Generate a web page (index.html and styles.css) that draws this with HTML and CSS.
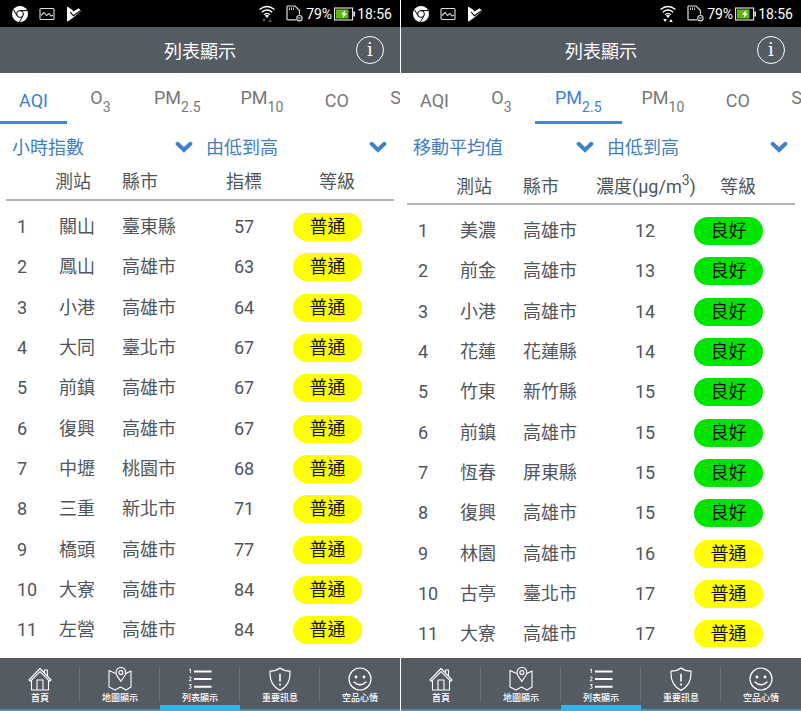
FILE: index.html
```html
<!DOCTYPE html>
<html lang="zh-Hant">
<head>
    <meta charset="UTF-8">
    <meta name="viewport" content="width=device-width, initial-scale=1.0">
    <title>列表顯示</title>
    <link rel="stylesheet" href="styles.css">
</head>
<body>
    <!-- Shared icons -->
    <svg class="sprite" aria-hidden="true">
        <symbol id="chrome" viewBox="0 0 16 16">
            <circle cx="8" cy="8" r="8" fill="#fff"/>
            <circle cx="8" cy="8" r="3.4" fill="none" stroke="#000" stroke-width="1"/>
            <path d="M8 4.6H15M5 9.7L1.6 3.8M11 9.7L7.5 15.8" fill="none" stroke="#000" stroke-width="1"/>
        </symbol>
        <symbol id="image" viewBox="0 0 16 14">
            <rect x="1" y="1.5" width="14" height="11" rx="1" fill="none" stroke="#ddd" stroke-width="1.1"/>
            <path d="M2 8.5L5 5.5L7.5 8.5L10 6.5L12 9L14 8" fill="none" stroke="#ddd" stroke-width="1.1"/>
        </symbol>
        <symbol id="play" viewBox="0 0 16 16">
            <path d="M1 1.2Q1 0.4 1.8 0.9L6 3.6L7.4 5.4L12.6 2.2L15 5L8 11L2.2 15.2Q1 15.8 1 14.6Z" fill="#fff"/>
            <path d="M4.2 6.2L7.4 9.8L14.6 4.6" fill="none" stroke="#000" stroke-width="1.1"/>
        </symbol>
        <symbol id="wifi" viewBox="0 0 16 18">
            <g fill="none" stroke="#fff" stroke-width="1.3">
                <path d="M0.5 4.5Q8 -1.5 15.5 4.5"/>
                <path d="M2.8 7.2Q8 2.8 13.2 7.2"/>
                <path d="M5 9.7Q8 7 11 9.7"/>
            </g>
            <path d="M6 10.5Q8 9 10 10.5L8 13Z" fill="#fff"/>
            <path d="M3.2 14H6.8L5 17ZM9.2 17H12.8L11 14Z" fill="currentColor"/>
        </symbol>
        <symbol id="sdcard" viewBox="0 0 17 17">
            <path d="M10 14.8H1.8Q1 14.8 1 14V1.8Q1 1 1.8 1H9L13.5 5.5V9.5" fill="none" stroke="#ddd" stroke-width="1.2"/>
            <path d="M3.5 2.5V5M5.5 2.5V5M7.5 2.5V5" stroke="#bbb" stroke-width="1"/>
            <circle cx="13.4" cy="13.2" r="2.7" fill="#000" stroke="#ddd" stroke-width="1.1"/>
            <path d="M12.3 12.1L14.5 14.3M14.5 12.1L12.3 14.3" stroke="#ddd" stroke-width="0.8"/>
        </symbol>
        <symbol id="battery" viewBox="0 0 21 14">
            <rect x="0.6" y="1" width="18" height="12" fill="#000" stroke="#eee" stroke-width="1.1"/>
            <rect x="19.4" y="4.5" width="1.6" height="5" fill="#eee"/>
            <rect x="2" y="2.4" width="12.5" height="9.2" fill="#5cb510"/>
            <path d="M11.5 2.8L7 7.6H9.5L8.5 11.2L13 6.4H10.5Z" fill="#fff"/>
        </symbol>
        <symbol id="chevron" viewBox="0 0 18 12">
            <path d="M2.6 2.8L9 9L15.4 2.8" fill="none" stroke="#4080c8" stroke-width="4" stroke-linecap="round"/>
        </symbol>
        <symbol id="home" viewBox="0 0 24 24">
            <g fill="none" stroke="#fff" stroke-width="1.1" stroke-linejoin="round">
                <path d="M1 13L12 1.5L23 13L21.5 14.2L12 4.6L2.5 14.2Z"/>
                <path d="M3.5 13.5V23H20.5V13.5"/>
                <path d="M9 23V13H15V23"/>
                <path d="M16.5 6V3H19.5V9"/>
            </g>
        </symbol>
        <symbol id="map" viewBox="0 0 24 24">
            <g fill="none" stroke="#fff" stroke-width="1.1" stroke-linejoin="round">
                <path d="M7.6 6.5L6.5 6L1 3.5V20L7 23L12.5 20L18 23L23 20V4L18 6.5L17.4 6.8"/>
                <path d="M12.8 14.5C10.5 10.8 8 8.5 8 5.4A4.9 4.9 0 0 1 17.8 5.4C17.8 8.5 15 10.8 12.8 14.5Z"/>
                <circle cx="12.9" cy="5.6" r="2"/>
            </g>
        </symbol>
        <symbol id="list" viewBox="0 0 24 24">
            <path d="M6 4.5H23.5M6 12H23.5M6 19.8H23.5" stroke="#fff" stroke-width="2"/>
            <g fill="none" stroke="#fff" stroke-width="0.9">
                <path d="M1.2 2.8L2.4 2V6"/>
                <path d="M1 10.4Q2.4 9.2 3.2 10.4Q3.3 11.5 1 13.8H3.5"/>
                <path d="M1 17.6H3.3L2.2 19.2Q3.6 19.4 3.3 20.8Q2.4 22 0.9 21.2"/>
            </g>
        </symbol>
        <symbol id="shield" viewBox="0 0 24 24">
            <path d="M12 1Q16.5 4.3 22 4.2Q22.8 18 12 23.4Q1.2 18 2 4.2Q7.5 4.3 12 1Z" fill="none" stroke="#fff" stroke-width="1.2" stroke-linejoin="round"/>
            <path d="M12 6.8V14.5M12 16.6V18.4" stroke="#fff" stroke-width="1.6"/>
        </symbol>
        <symbol id="smile" viewBox="0 0 24 24">
            <circle cx="12" cy="12" r="11" fill="none" stroke="#fff" stroke-width="1.2"/>
            <circle cx="8" cy="10" r="1.4" fill="#fff"/>
            <circle cx="16" cy="10" r="1.4" fill="#fff"/>
            <path d="M6 15Q12 20.5 18 15" fill="none" stroke="#fff" stroke-width="1.3" stroke-linecap="round"/>
        </symbol>
    </svg>

    <section class="phone">
        <div class="status">
            <svg class="icon-16"><use href="#chrome"/></svg>
            <svg class="icon-16"><use href="#image"/></svg>
            <svg class="icon-16"><use href="#play"/></svg>
            <svg class="wifi idle"><use href="#wifi"/></svg>
            <svg class="sdcard"><use href="#sdcard"/></svg>
            <span class="percent">79%</span>
            <svg class="battery"><use href="#battery"/></svg>
            <span>18:56</span>
        </div>
        <header class="titlebar">
            <h1>列表顯示</h1>
            <button class="info" type="button" aria-label="說明">i</button>
        </header>
        <nav class="tabs">
            <button type="button" class="active">AQI</button>
            <button type="button">O<sub>3</sub></button>
            <button type="button">PM<sub>2.5</sub></button>
            <button type="button">PM<sub>10</sub></button>
            <button type="button">CO</button>
            <button type="button">SO<sub>2</sub></button>
        </nav>
        <form class="filters">
            <div class="filter">
                <select aria-label="指標"><option>小時指數</option></select>
                <svg><use href="#chevron"/></svg>
            </div>
            <div class="filter">
                <select aria-label="排序"><option>由低到高</option></select>
                <svg><use href="#chevron"/></svg>
            </div>
        </form>
        <div class="list">
            <table>
                <colgroup><col class="c-no"><col class="c-site"><col class="c-county"><col class="c-value"><col></colgroup>
                <thead>
                    <tr><th></th><th>測站</th><th>縣市</th><th>指標</th><th>等級</th></tr>
                </thead>
                <tbody>
                    <tr><td>1</td><td>關山</td><td>臺東縣</td><td>57</td><td><span class="level normal">普通</span></td></tr>
                    <tr><td>2</td><td>鳳山</td><td>高雄市</td><td>63</td><td><span class="level normal">普通</span></td></tr>
                    <tr><td>3</td><td>小港</td><td>高雄市</td><td>64</td><td><span class="level normal">普通</span></td></tr>
                    <tr><td>4</td><td>大同</td><td>臺北市</td><td>67</td><td><span class="level normal">普通</span></td></tr>
                    <tr><td>5</td><td>前鎮</td><td>高雄市</td><td>67</td><td><span class="level normal">普通</span></td></tr>
                    <tr><td>6</td><td>復興</td><td>高雄市</td><td>67</td><td><span class="level normal">普通</span></td></tr>
                    <tr><td>7</td><td>中壢</td><td>桃園市</td><td>68</td><td><span class="level normal">普通</span></td></tr>
                    <tr><td>8</td><td>三重</td><td>新北市</td><td>71</td><td><span class="level normal">普通</span></td></tr>
                    <tr><td>9</td><td>橋頭</td><td>高雄市</td><td>77</td><td><span class="level normal">普通</span></td></tr>
                    <tr><td>10</td><td>大寮</td><td>高雄市</td><td>84</td><td><span class="level normal">普通</span></td></tr>
                    <tr><td>11</td><td>左營</td><td>高雄市</td><td>84</td><td><span class="level normal">普通</span></td></tr>
                </tbody>
            </table>
        </div>
        <nav class="bottombar">
            <a href="#"><svg><use href="#home"/></svg>首頁</a>
            <a href="#"><svg><use href="#map"/></svg>地圖顯示</a>
            <a href="#" class="active"><svg><use href="#list"/></svg>列表顯示</a>
            <a href="#"><svg><use href="#shield"/></svg>重要訊息</a>
            <a href="#"><svg><use href="#smile"/></svg>空品心情</a>
        </nav>
    </section>

    <section class="phone">
        <div class="status">
            <svg class="icon-16"><use href="#chrome"/></svg>
            <svg class="icon-16"><use href="#image"/></svg>
            <svg class="icon-16"><use href="#play"/></svg>
            <svg class="wifi"><use href="#wifi"/></svg>
            <svg class="sdcard"><use href="#sdcard"/></svg>
            <span class="percent">79%</span>
            <svg class="battery"><use href="#battery"/></svg>
            <span>18:56</span>
        </div>
        <header class="titlebar">
            <h1>列表顯示</h1>
            <button class="info" type="button" aria-label="說明">i</button>
        </header>
        <nav class="tabs">
            <button type="button">AQI</button>
            <button type="button">O<sub>3</sub></button>
            <button type="button" class="active">PM<sub>2.5</sub></button>
            <button type="button">PM<sub>10</sub></button>
            <button type="button">CO</button>
            <button type="button">SO<sub>2</sub></button>
        </nav>
        <form class="filters">
            <div class="filter">
                <select aria-label="指標"><option>移動平均值</option></select>
                <svg><use href="#chevron"/></svg>
            </div>
            <div class="filter">
                <select aria-label="排序"><option>由低到高</option></select>
                <svg><use href="#chevron"/></svg>
            </div>
        </form>
        <div class="list">
            <table>
                <colgroup><col class="c-no"><col class="c-site"><col class="c-county"><col class="c-value"><col></colgroup>
                <thead class="tall">
                    <tr><th></th><th>測站</th><th>縣市</th><th>濃度(μg/m<sup>3</sup>)</th><th>等級</th></tr>
                </thead>
                <tbody>
                    <tr><td>1</td><td>美濃</td><td>高雄市</td><td>12</td><td><span class="level good">良好</span></td></tr>
                    <tr><td>2</td><td>前金</td><td>高雄市</td><td>13</td><td><span class="level good">良好</span></td></tr>
                    <tr><td>3</td><td>小港</td><td>高雄市</td><td>14</td><td><span class="level good">良好</span></td></tr>
                    <tr><td>4</td><td>花蓮</td><td>花蓮縣</td><td>14</td><td><span class="level good">良好</span></td></tr>
                    <tr><td>5</td><td>竹東</td><td>新竹縣</td><td>15</td><td><span class="level good">良好</span></td></tr>
                    <tr><td>6</td><td>前鎮</td><td>高雄市</td><td>15</td><td><span class="level good">良好</span></td></tr>
                    <tr><td>7</td><td>恆春</td><td>屏東縣</td><td>15</td><td><span class="level good">良好</span></td></tr>
                    <tr><td>8</td><td>復興</td><td>高雄市</td><td>15</td><td><span class="level good">良好</span></td></tr>
                    <tr><td>9</td><td>林園</td><td>高雄市</td><td>16</td><td><span class="level normal">普通</span></td></tr>
                    <tr><td>10</td><td>古亭</td><td>臺北市</td><td>17</td><td><span class="level normal">普通</span></td></tr>
                    <tr><td>11</td><td>大寮</td><td>高雄市</td><td>17</td><td><span class="level normal">普通</span></td></tr>
                </tbody>
            </table>
        </div>
        <nav class="bottombar">
            <a href="#"><svg><use href="#home"/></svg>首頁</a>
            <a href="#"><svg><use href="#map"/></svg>地圖顯示</a>
            <a href="#" class="active"><svg><use href="#list"/></svg>列表顯示</a>
            <a href="#"><svg><use href="#shield"/></svg>重要訊息</a>
            <a href="#"><svg><use href="#smile"/></svg>空品心情</a>
        </nav>
    </section>
</body>
</html>
```
FILE: styles.css
```css
* {
    box-sizing: border-box;
}
body {
    display: grid;
    grid-template-columns: 1fr 1fr;
    gap: 1px;
    height: 100vh;
    margin: 0;
    background-color: #ffffff;
    font-family: Roboto, "Noto Sans CJK TC", sans-serif;
    font-size: 18px;
    color: #50555b;
}
button, select {
    font: inherit;
}
.sprite {
    position: absolute;
    width: 0;
    height: 0;
}
.phone {
    display: flex;
    flex-direction: column;
    min-width: 0;
    height: 100vh;
    overflow: hidden;
}

/* Android status bar */
.status {
    display: flex;
    align-items: center;
    flex: none;
    height: 27px;
    padding: 0 8px 0 12px;
    background-color: #000000;
    color: #ffffff;
    font-size: 14px;
}
.icon-16 {
    width: 16px;
    height: 16px;
    margin-right: 11px;
}
.wifi {
    width: 16px;
    height: 18px;
    margin-left: auto;
    margin-right: 11px;
}
.wifi.idle {
    color: #555555;
}
.sdcard {
    width: 17px;
    height: 17px;
    margin-right: 3px;
}
.percent {
    margin-right: 2px;
}
.battery {
    width: 21px;
    height: 14px;
    margin-right: 2px;
}

.titlebar {
    display: grid;
    grid-template-columns: 1fr auto 1fr;
    align-items: center;
    flex: none;
    height: 46px;
    padding: 0 16px;
    background-color: #555b63;
    color: #ffffff;
}
.titlebar h1 {
    grid-column: 2;
    margin: 0;
    font-size: 18px;
    font-weight: 400;
}
.info {
    justify-self: end;
    width: 28px;
    height: 28px;
    padding: 0;
    border: 1px solid #ffffff;
    border-radius: 50%;
    background: none;
    color: #ffffff;
    font-family: "DejaVu Serif", serif;
    font-size: 18px;
    line-height: 24px;
}

.tabs {
    display: flex;
    flex: none;
    height: 51px;
    overflow: hidden;
}
.tabs button {
    flex: none;
    min-width: 67px;
    padding: 7px 20px 0;
    border: 0;
    border-bottom: 3px solid transparent;
    background: none;
    color: #777777;
}
.tabs button:first-child {
    padding-left: 19px;
    padding-right: 19px;
}
.tabs button.active {
    border-bottom-color: #4a82cf;
    color: #4080d0;
}
sub, sup {
    font-size: 14px;
}
sub {
    vertical-align: -8px;
}
sup {
    vertical-align: 8px;
}

.filters {
    display: grid;
    grid-template-columns: 1fr 1fr;
    gap: 13px;
    flex: none;
    padding: 8px 13px 0 12px;
}
.filter {
    display: grid;
    align-items: center;
}
.filter select {
    grid-area: 1 / 1;
    height: 30px;
    padding: 0;
    border: 0;
    appearance: none;
    background: none;
    color: #4080c0;
}
.filter svg {
    grid-area: 1 / 1;
    justify-self: end;
    width: 18px;
    height: 12px;
    pointer-events: none;
}

.list {
    flex: 1;
    min-height: 0;
    margin: 0 6px 11px;
    overflow-y: auto;
    scrollbar-width: none;
}
table {
    width: 100%;
    table-layout: fixed;
    border-collapse: separate;
    border-spacing: 0;
}
.c-no {
    width: 49px;
}
.c-site {
    width: 67px;
}
.c-county {
    width: 73px;
}
.c-value {
    width: 98px;
}
th, td {
    padding: 0;
    text-align: left;
    white-space: nowrap;
}
th {
    height: 39px;
    padding-top: 2px;
    border-bottom: 2px solid #b5b5b5;
    font-weight: 400;
    line-height: 26px;
}
.tall th {
    height: 43px;
    padding-top: 5px;
    vertical-align: baseline;
}
th:nth-child(4), td:nth-child(4) {
    text-align: center;
}
th:nth-child(5) {
    padding-left: 26px;
}
td {
    height: 40px;
    line-height: 28px;
}
tr:nth-child(3n) td {
    height: 41px;
}
tbody tr:first-child td {
    height: 46px;
    padding-top: 6px;
}
td:nth-child(1) {
    padding-left: 11px;
}
td:nth-child(2) {
    padding-left: 4px;
}
.level {
    display: block;
    width: 69px;
    border-radius: 14px;
    text-align: center;
    color: #111111;
}
.normal {
    background-color: #ffff00;
}
.good {
    background-color: #00e400;
}

.bottombar {
    display: grid;
    grid-template-columns: repeat(5, 1fr);
    flex: none;
    height: 53px;
    background-color: #555b63;
}
.bottombar a {
    display: flex;
    flex-direction: column;
    align-items: center;
    padding-top: 9px;
    border-bottom: 2px solid #3d95b8;
    background: linear-gradient(#6a7077, #6a7077) right 9px / 1px 35px no-repeat;
    color: #ffffff;
    font-size: 9px;
    font-weight: 500;
    line-height: 14px;
    text-decoration: none;
}
.bottombar a:last-child {
    background: none;
}
.bottombar a.active {
    border-bottom: 6px solid #33b5e5;
}
.bottombar svg {
    width: 24px;
    height: 24px;
    flex: none;
}
```
